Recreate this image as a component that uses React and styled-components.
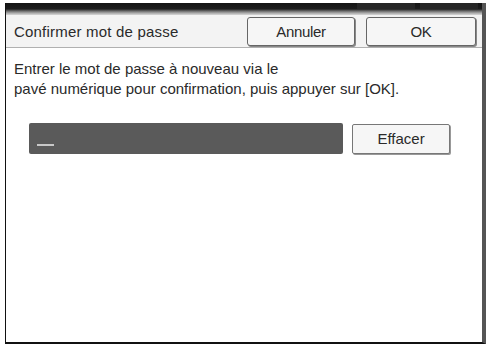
import React from 'react';
import styled, { createGlobalStyle } from 'styled-components';

const GlobalStyle = createGlobalStyle`
  html, body {
    margin: 0;
    padding: 0;
    background: #ffffff;
  }
  body {
    font-family: 'Liberation Sans', Arial, sans-serif;
  }
`;

export default function App() {
  return (
    <>
      <GlobalStyle />
      <Page>
        <Screen>
          <TopBar>
            <Tab />
            <Tab />
          </TopBar>
          <Header>
            <Title>Confirmer mot de passe</Title>
            <HeaderButton width={108}>Annuler</HeaderButton>
            <HeaderButton width={110}>OK</HeaderButton>
          </Header>
          <Body>
            <Message>
              Entrer le mot de passe à nouveau via le
              <br />
              pavé numérique pour confirmation, puis appuyer sur [OK].
            </Message>
            <FieldRow>
              <PasswordField>
                <Cursor />
              </PasswordField>
              <ClearButton>Effacer</ClearButton>
            </FieldRow>
          </Body>
        </Screen>
      </Page>
    </>
  );
}

const Page = styled.div`
  width: 487px;
  height: 345px;
  padding: 3px 0 0 5px;
  box-sizing: border-box;
`;

const Screen = styled.div`
  width: 481px;
  height: 341px;
  box-sizing: border-box;
  border-left: 1px solid #111;
  border-bottom: 2px solid #111;
  border-right: 4px solid #555;
  display: flex;
  flex-direction: column;
  background: #ffffff;
`;

const TopBar = styled.div`
  height: 12px;
  flex-shrink: 0;
  background: linear-gradient(to bottom, #141414 0, #1c1c1c 6px, #6a6a6a 8px, #a8a8a8 10px, #d8d8d8 12px);
  display: flex;
  justify-content: flex-end;
  gap: 5px;
  padding-right: 4px;
`;

const Tab = styled.div`
  width: 58px;
  height: 6px;
  background: #262626;
`;

const Header = styled.div`
  height: 33px;
  flex-shrink: 0;
  box-sizing: border-box;
  background: #f3f3f3;
  border-bottom: 1px solid #b0b0b0;
  display: flex;
  align-items: center;
  padding: 0 6px 2px 8px;
`;

const Title = styled.div`
  flex: 1;
  font-size: 15px;
  color: #2a2a2a;
  letter-spacing: 0.2px;
  padding-top: 2px;
`;

const HeaderButton = styled.div`
  width: ${p => p.width}px;
  height: 29px;
  box-sizing: border-box;
  margin-left: 11px;
  margin-top: 2px;
  background: #f6f6f6;
  border: 1px solid #666;
  border-radius: 3px;
  box-shadow: 1px 1px 0 #888;
  display: flex;
  align-items: center;
  justify-content: center;
  font-size: 15px;
  color: #2a2a2a;
  letter-spacing: -0.3px;
  &:first-of-type {
    margin-left: 0;
  }
`;

const Body = styled.div`
  flex: 1;
  padding: 11px 8px 0 8px;
`;

const Message = styled.div`
  font-size: 15px;
  line-height: 20px;
  color: #2a2a2a;
`;

const FieldRow = styled.div`
  display: flex;
  align-items: center;
  gap: 9px;
  margin-top: 24px;
  padding-left: 15px;
`;

const PasswordField = styled.div`
  width: 314px;
  height: 31px;
  box-sizing: border-box;
  background: #5a5a5a;
  border-radius: 2px;
  display: flex;
  align-items: flex-end;
  padding: 0 0 8px 8px;
`;

const Cursor = styled.div`
  width: 17px;
  height: 2px;
  background: #c8c8c8;
`;

const ClearButton = styled.div`
  width: 98px;
  height: 30px;
  box-sizing: border-box;
  background: #f6f6f6;
  border: 1px solid #777;
  border-radius: 2px;
  box-shadow: 1px 1px 0 #999;
  display: flex;
  align-items: center;
  justify-content: center;
  font-size: 15px;
  color: #2a2a2a;
`;
